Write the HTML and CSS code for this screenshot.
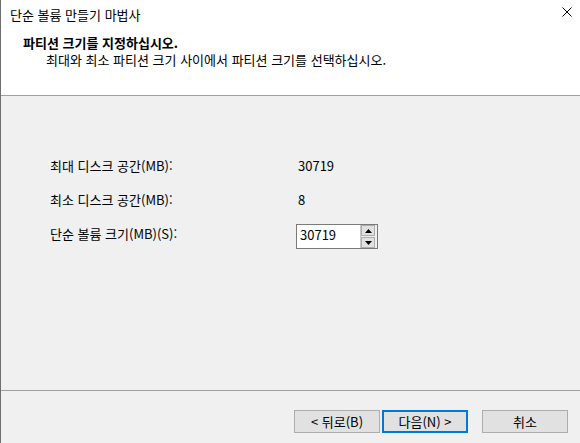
FILE: index.html
```html
<!DOCTYPE html>
<html lang="ko">
<head>
<meta charset="utf-8">
<link rel="stylesheet" href="styles.css">
</head>
<body>
<div class="window">
  <div class="top">
    <div class="titlebar">
      <span class="title">단순 볼륨 만들기 마법사</span>
      <svg class="close" width="10" height="10" viewBox="0 0 10 10"><path d="M0.5 0.5 L9.5 9.5 M9.5 0.5 L0.5 9.5" stroke="#000" stroke-width="1" fill="none"/></svg>
    </div>
    <div class="heading">파티션 크기를 지정하십시오.</div>
    <div class="subheading">최대와 최소 파티션 크기 사이에서 파티션 크기를 선택하십시오.</div>
  </div>
  <div class="content">
    <div class="row r1"><span class="label">최대 디스크 공간(MB):</span><span class="value">30719</span></div>
    <div class="row r2"><span class="label">최소 디스크 공간(MB):</span><span class="value">8</span></div>
    <div class="row r3"><span class="label">단순 볼륨 크기(MB)(S):</span>
      <div class="spin">
        <span class="spin-text">30719</span>
        <div class="spin-btns">
          <div class="sbtn"><svg width="7" height="4" viewBox="0 0 7 4"><path d="M3.5 0 L7 4 L0 4 Z" fill="#000"/></svg></div>
          <div class="sbtn"><svg width="7" height="4" viewBox="0 0 7 4"><path d="M0 0 L7 0 L3.5 4 Z" fill="#000"/></svg></div>
        </div>
      </div>
    </div>
  </div>
  <div class="footer">
    <button class="btn">&lt; 뒤로(B)</button>
    <button class="btn primary">다음(N) &gt;</button>
    <button class="btn cancel">취소</button>
  </div>
</div>
</body>
</html>
```
FILE: styles.css
```css
html, body {
  margin: 0;
  padding: 0;
}
body {
  width: 580px;
  height: 443px;
  overflow: hidden;
  font-family: "Noto Sans CJK KR", "Noto Sans", sans-serif;
  font-size: 13px;
  color: #000;
}
.window {
  width: 579px;
  height: 443px;
  border-left: 1px solid #6f6f6f;
  display: flex;
  flex-direction: column;
  background: #f0f0f0;
}
.top {
  background: #fff;
  height: 95px;
  border-bottom: 1px solid #a0a0a0;
}
.titlebar {
  height: 29px;
  display: flex;
  align-items: center;
  justify-content: space-between;
  padding-left: 9px;
  padding-right: 8px;
}
.title {
  line-height: 16px;
}
.close {
  margin-top: -5px;
}
.heading {
  margin-top: 5px;
  padding-left: 22px;
  line-height: 17px;
  font-weight: bold;
}
.subheading {
  padding-left: 45px;
  line-height: 17px;
}
.content {
  flex: 1;
  padding-top: 62px;
  padding-left: 49px;
  display: flex;
  flex-direction: column;
}
.row {
  display: flex;
  align-items: center;
  line-height: 16px;
}
.label {
  width: 246px;
}
.value {
  padding-left: 2px;
}
.r2 {
  margin-top: 18px;
}
.r3 {
  margin-top: 16px;
}
.r3 .label {
  padding-bottom: 5px;
}
.spin {
  width: 80px;
  height: 23px;
  border: 1px solid #7a7a7a;
  background: #fff;
  display: flex;
  align-items: center;
  justify-content: space-between;
}
.spin-text {
  padding-left: 3px;
  padding-bottom: 3px;
}
.spin-btns {
  height: 23px;
  width: 17px;
  display: flex;
  flex-direction: column;
  gap: 1px;
  padding: 0 2px 0 0;
  box-sizing: border-box;
  border-left: 1px solid #c8c8c8;
  background: #f0f0f0;
}
.sbtn {
  flex: 1;
  background: #e1e1e1;
  border: 1px solid #adadad;
  display: flex;
  align-items: center;
  justify-content: center;
}
.footer {
  height: 53px;
  border-top: 1px solid #a0a0a0;
  display: flex;
  align-items: flex-start;
  justify-content: flex-end;
  padding-top: 19px;
  padding-right: 12px;
  box-sizing: border-box;
}
.btn {
  width: 86px;
  height: 23px;
  background: #e1e1e1;
  border: 1px solid #adadad;
  font-family: inherit;
  font-size: 13px;
  color: #000;
  padding: 0;
  margin: 0;
  line-height: 16px;
}
.primary {
  border: 2px solid #0078d7;
  margin-left: 2px;
}
.cancel {
  margin-left: 14px;
}
```
